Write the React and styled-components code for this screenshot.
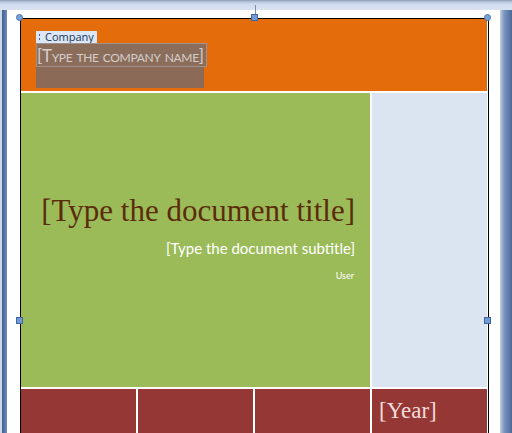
import React from "react";
import styled, { createGlobalStyle } from "styled-components";

const Global = createGlobalStyle`
  html, body { margin: 0; padding: 0; background: #ffffff; }
  #root { width: 512px; height: 433px; }
`;

const Screen = styled.div`
  width: 512px;
  height: 433px;
  overflow: hidden;
  display: flex;
  flex-direction: column;
`;

const TopBar = styled.div`
  height: 10px;
  flex: none;
  background: linear-gradient(to bottom, #8d9bb4 0, #b9c8de 2px, #cfdbed 4px, #d9e3f1 100%);
`;

const Body = styled.div`
  flex: 1;
  display: flex;
  min-height: 0;
`;

const LeftStrip = styled.div`
  width: 7px;
  flex: none;
  background: linear-gradient(to right, #cdd8e8 0, #cdd8e8 2px, #3f5f93 2px, #6d8dbd 7px);
`;

const RightStrip = styled.div`
  width: 12px;
  flex: none;
  background: linear-gradient(to right, #c4d0e2 0, #7d96c0 4px, #4b6898 12px);
`;

const Page = styled.div`
  flex: 1;
  background: #ffffff;
  padding: 8px 0 0 13px;
  min-width: 0;
`;

const Frame = styled.div`
  position: relative;
  border: 1px solid #000000;
  border-bottom: none;
  padding-right: 1px;
  height: 430px;
  box-sizing: border-box;
  width: 469px;
  display: flex;
  flex-direction: column;
  gap: 2px;
  background: #ffffff;
`;

const Header = styled.div`
  height: 72px;
  flex: none;
  background: #e46c0a;
  padding: 12px 0 0 15px;
  box-sizing: border-box;
  display: flex;
  flex-direction: column;
  align-items: flex-start;
`;

const Tag = styled.div`
  height: 12px;
  width: 61px;
  box-sizing: border-box;
  display: flex;
  align-items: center;
  gap: 5px;
  padding: 0 0 0 3px;
  background: #dce6f4;
  font-family: "Open Sans", "Liberation Sans", sans-serif;
  font-size: 11px;
  color: #17375e;
  line-height: 12px;
  white-space: nowrap;
`;

const Grip = styled.span`
  display: flex;
  flex-direction: column;
  gap: 2px;
  & > i {
    display: block;
    width: 1px;
    height: 2px;
    background: #3a68b0;
  }
`;

const NameBox = styled.div`
  width: 171px;
  height: 24px;
  box-sizing: border-box;
  border: 1px solid #a2918a;
  background: #8b6d5c;
  display: flex;
  align-items: center;
  padding-left: 0;
  font-family: "Lato", "Open Sans", sans-serif;
  font-variant: small-caps;
  font-size: 17px;
  color: #d6cdc8;
  white-space: nowrap;
  letter-spacing: -0.3px;
  overflow: hidden;
`;

const NameFill = styled.div`
  width: 168px;
  height: 21px;
  background: #8b6a57;
`;

const Grid = styled.div`
  display: grid;
  grid-template-columns: repeat(4, 1fr);
  column-gap: 2px;
`;

const Middle = styled(Grid)`
  height: 294px;
  flex: none;
`;

const TitlePanel = styled.div`
  grid-column: span 3;
  background: #9bbb59;
  display: flex;
  flex-direction: column;
  align-items: flex-end;
  padding: 100px 15px 0 0;
  box-sizing: border-box;
  text-align: right;
`;

const Title = styled.div`
  font-family: "Liberation Serif", "DejaVu Serif", serif;
  font-size: 31px;
  line-height: 36px;
  color: #5b2c0b;
  white-space: nowrap;
`;

const Subtitle = styled.div`
  margin-top: 10px;
  font-family: "Lato", "Open Sans", sans-serif;
  font-size: 15px;
  line-height: 18px;
  color: #ffffff;
  white-space: nowrap;
`;

const Author = styled.div`
  margin-top: 14px;
  font-family: "Lato", "Open Sans", sans-serif;
  font-size: 9px;
  line-height: 10px;
  color: #ffffff;
  padding-right: 1px;
`;

const SidePanel = styled.div`
  background: #dbe5f1;
`;

const Footer = styled(Grid)`
  height: 60px;
  flex: none;
`;

const Cell = styled.div`
  background: #953735;
  padding: 8px 0 0 7px;
  box-sizing: border-box;
`;

const Year = styled.div`
  font-family: "Liberation Serif", "DejaVu Serif", serif;
  font-size: 23px;
  line-height: 27px;
  color: #f2dcdb;
`;

const RoundHandle = styled.div`
  position: absolute;
  width: 7px;
  height: 7px;
  border-radius: 50%;
  background: #7ba2d6;
  border: 1px solid #4a75b0;
  box-sizing: border-box;
  left: ${(p) => p.$x - 4}px;
  top: ${(p) => p.$y - 4}px;
`;

const SquareHandle = styled.div`
  position: absolute;
  width: 7px;
  height: 7px;
  background: #6f9ad6;
  border: 1px solid #41679e;
  box-sizing: border-box;
  left: ${(p) => p.$x - 4}px;
  top: ${(p) => p.$y - 4}px;
`;

const Stem = styled.div`
  position: absolute;
  width: 1px;
  height: 9px;
  background: #7d8fa8;
  left: 234px;
  top: -14px;
`;

export default function App() {
  return (
    <>
      <Global />
      <Screen>
        <TopBar />
        <Body>
          <LeftStrip />
          <Page>
            <Frame>
              <Header>
                <Tag>
                  <Grip>
                    <i />
                    <i />
                  </Grip>
                  Company
                </Tag>
                <NameBox>[Type the company name]</NameBox>
                <NameFill />
              </Header>
              <Middle>
                <TitlePanel>
                  <Title>[Type the document title]</Title>
                  <Subtitle>[Type the document subtitle]</Subtitle>
                  <Author>User</Author>
                </TitlePanel>
                <SidePanel />
              </Middle>
              <Footer>
                <Cell />
                <Cell />
                <Cell />
                <Cell>
                  <Year>[Year]</Year>
                </Cell>
              </Footer>
              <Stem />
              <RoundHandle $x={-1} $y={-1} />
              <RoundHandle $x={467} $y={-1} />
              <SquareHandle $x={234} $y={-1} />
              <SquareHandle $x={-1} $y={302} />
              <SquareHandle $x={467} $y={302} />
            </Frame>
          </Page>
          <RightStrip />
        </Body>
      </Screen>
    </>
  );
}
